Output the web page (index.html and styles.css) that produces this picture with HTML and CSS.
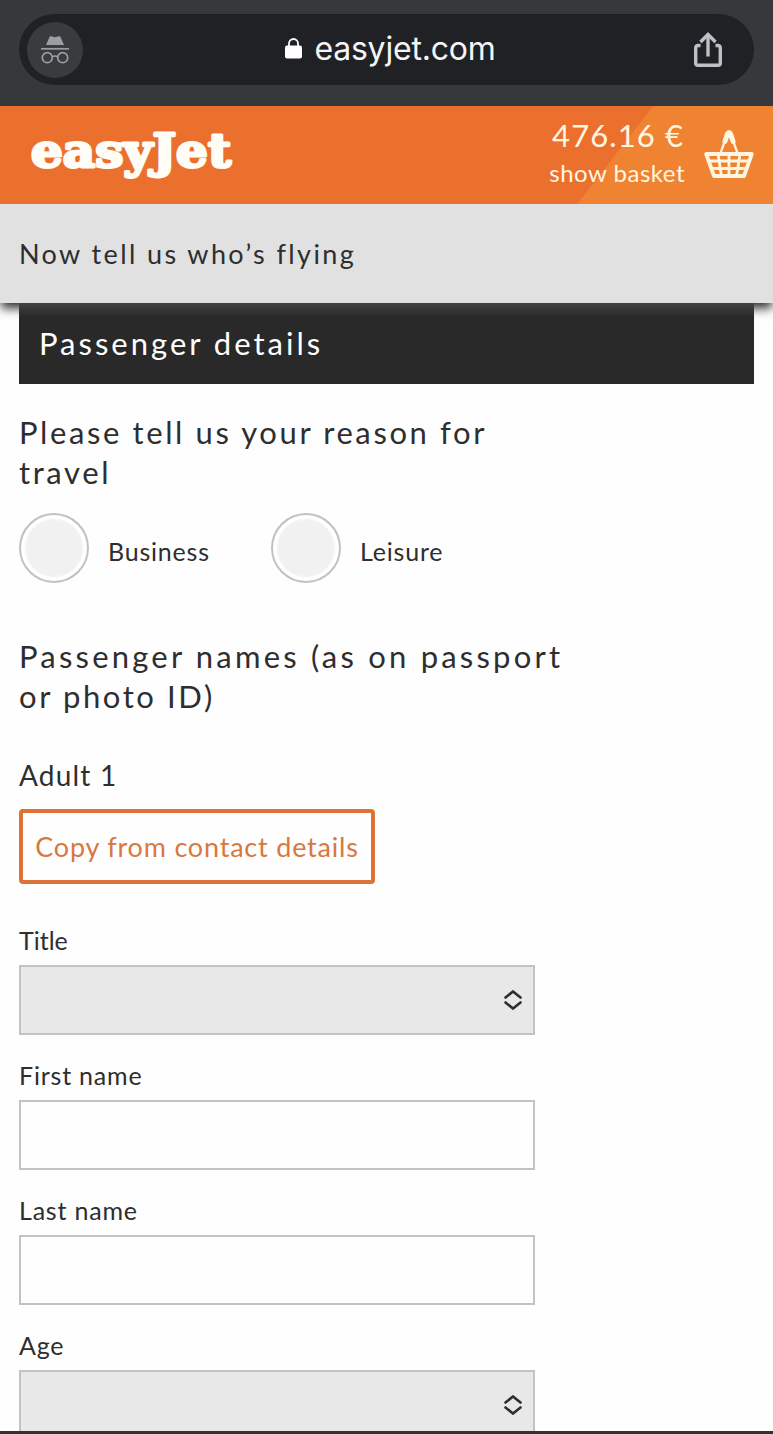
FILE: index.html
```
<!DOCTYPE html>
<html lang="en">
<head>
<meta charset="utf-8">
<title>easyJet - Passenger details</title>
<link rel="stylesheet" href="styles.css">
</head>
<body>
	<div class="browser-bar">
		<div class="address">
			<span class="incognito">
				<svg width="28" height="28" viewBox="0 0 28 28" fill="none" stroke="#9B9DA2" stroke-width="1.7">
					<path d="M5 9 L8.6 .8 Q9 0 10 .3 L14 1.3 L18 .3 Q19 0 19.4 .8 L23 9 Z" fill="#9B9DA2" stroke="none"/>
					<path d="M0 12.8 H28"/>
					<circle cx="6.3" cy="21.7" r="5"/>
					<circle cx="21.7" cy="21.7" r="5"/>
					<path d="M11.3 20.7 Q14 19.3 16.7 20.7"/>
				</svg>
			</span>
			<div class="domain">
				<svg width="17" height="21" viewBox="0 0 17 21">
					<path d="M4 9 V5.5 a4.5 4.5 0 0 1 9 0 V9" fill="none" stroke="#fff" stroke-width="1.8"/>
					<rect x="0" y="7.5" width="17" height="13" rx="2" fill="#fff"/>
				</svg>
				<span>easyjet.com</span>
			</div>
			<svg class="share" width="30" height="36" viewBox="0 0 30 36" fill="none" stroke="#BFC0C7" stroke-width="3.4">
				<path d="M7.5 13.5 H5 Q2.7 13.5 2.7 16 V31 Q2.7 33.3 5 33.3 H25 Q27.3 33.3 27.3 31 V16 Q27.3 13.5 25 13.5 H22.5"/>
				<path d="M15 24.5 V3"/>
				<path d="M7.5 10 L15 2.5 L22.5 10"/>
			</svg>
		</div>
	</div>
	<header class="header">
		<svg class="logo" width="220" height="80" viewBox="0 0 220 80">
			<text x="3" y="52" textLength="200" lengthAdjust="spacingAndGlyphs">easyJet</text>
		</svg>
		<div class="basket">
			<div class="basket-text">
				<div class="price">476.16 €</div>
				<div class="show">show basket</div>
			</div>
			<svg width="50" height="50" viewBox="0 0 50 50" fill="none" stroke="#FFF6E2">
				<path d="M16.5 24 L22 9 M33.5 24 L28 9" stroke-width="2.2"/>
				<path d="M20.9 12.5 L23.4 5 Q25 2.2 26.6 5 L29.1 12.5" stroke-width="5" stroke-linecap="round"/>
				<path d="M2.2 25 H47.8 L40 47 H10 Z" stroke-width="3.8" stroke-linejoin="round"/>
				<path d="M5 32 H45 M8 39.5 H42 M14 25 L17.5 47 M25 25 V47 M36 25 L32.5 47" stroke-width="2.8"/>
			</svg>
		</div>
	</header>
	<div class="step">Now tell us who’s flying</div>
	<main>
		<h1>Passenger details</h1>
		<h2>Please tell us your reason for travel</h2>
		<div class="reasons">
			<label class="reason"><input type="radio" name="reason"><span>Business</span></label>
			<label class="reason"><input type="radio" name="reason"><span>Leisure</span></label>
		</div>
		<h2 class="names"><span>Passenger names (as on passport</span> or photo ID)</h2>
		<h3>Adult 1</h3>
		<button class="copy" type="button">Copy from contact details</button>
		<form>
			<label class="field"><span class="title">Title</span>
				<div class="box select">
					<svg width="18" height="20" viewBox="0 0 18 20"><path d="M1.5 7.5 L9 1.5 L16.5 7.5 M1.5 12.5 L9 18.5 L16.5 12.5"/></svg>
				</div>
			</label>
			<label class="field"><span>First name</span>
				<input class="box" type="text">
			</label>
			<label class="field"><span>Last name</span>
				<input class="box" type="text">
			</label>
			<label class="field"><span>Age</span>
				<div class="box select">
					<svg width="18" height="20" viewBox="0 0 18 20"><path d="M1.5 7.5 L9 1.5 L16.5 7.5 M1.5 12.5 L9 18.5 L16.5 12.5"/></svg>
				</div>
			</label>
		</form>
	</main>
	<footer></footer>
</body>
</html>
```
FILE: styles.css
```
* {
	box-sizing: border-box;
}
body {
	margin: 0;
	height: 1434px;
	overflow: hidden;
	display: flex;
	flex-direction: column;
	background: #FEFEFE;
	color: #2E2E2E;
	font-family: Lato, "Liberation Sans", sans-serif;
}
svg {
	display: block;
	flex: none;
}
.browser-bar {
	flex: none;
	height: 106px;
	padding: 14px 19px 0;
	background: #37383C;
	border-bottom: 1px solid #4A2F24;
}
.address {
	height: 71px;
	padding: 0 31px 0 8px;
	border-radius: 36px;
	background: #202124;
	display: flex;
	align-items: center;
	justify-content: space-between;
}
.incognito {
	width: 56px;
	height: 56px;
	border-radius: 50%;
	background: #3A3B3E;
	display: flex;
	align-items: center;
	justify-content: center;
}
.domain {
	display: flex;
	align-items: center;
	gap: 12px;
	margin: 0 0 2px 5px;
	color: #F5F5F6;
	font-family: Inter, sans-serif;
	font-size: 32px;
	letter-spacing: -.2px;
}
.header {
	position: relative;
	z-index: 2;
	flex: none;
	height: 98px;
	padding: 0 19px 0 28px;
	display: flex;
	justify-content: space-between;
	background: linear-gradient(127.8deg, #EC702D 0 76.9%, #EF8331 77%);
}
.logo {
	margin-top: 9px;
}
.logo text {
	font: bold 46px "DejaVu Serif", serif;
	fill: #FFFDF6;
	stroke: #FFFDF6;
	stroke-width: 3;
	stroke-linejoin: round;
}
.basket {
	display: flex;
	gap: 19px;
	color: #FFF6E2;
}
.basket > svg {
	margin-top: 23px;
}
.basket-text {
	text-align: right;
	white-space: nowrap;
}
.price {
	margin-top: 10px;
	padding-right: 1px;
	font-size: 31px;
	line-height: 38px;
	letter-spacing: 1.1px;
}
.show {
	margin-top: 7px;
	font-size: 24px;
	line-height: 24px;
	letter-spacing: .5px;
}
.step {
	position: relative;
	flex: none;
	height: 99px;
	padding-left: 19px;
	background: #E1E1E1;
	box-shadow: 0 6px 10px -1px rgba(0,0,0,.85);
	font-size: 27px;
	line-height: 100px;
	letter-spacing: 2.4px;
}
main {
	flex: 1;
	min-height: 0;
	overflow: hidden;
	padding: 0 19px;
}
h1, h2, h3 {
	margin: 0;
	font-weight: 400;
}
h1 {
	position: relative;
	height: 81px;
	padding-left: 20px;
	background: linear-gradient(#424443, #292929 14px);
	color: #fff;
	font-size: 31px;
	line-height: 81px;
	letter-spacing: 3px;
}
h2 {
	width: 570px;
	margin-top: 28px;
	padding-right: 10px;
	font-size: 31px;
	line-height: 40px;
	letter-spacing: 2.6px;
}
.reasons {
	display: flex;
	margin-top: 21px;
}
.reason {
	width: 252px;
	display: flex;
	align-items: center;
	gap: 19px;
	font-size: 25px;
	letter-spacing: .8px;
}
.reason span {
	margin-top: 6px;
}
.reason input {
	appearance: none;
	flex: none;
	width: 70px;
	height: 70px;
	margin: 0;
	border: 2px solid #C2C2C2;
	border-radius: 50%;
	background: #F1F1F1;
	box-shadow: inset 0 0 2px 4px #fff;
}
.names {
	margin-top: 53px;
}
.names span {
	letter-spacing: 3.2px;
}
h3 {
	margin-top: 39px;
	font-size: 28px;
	line-height: 40px;
	letter-spacing: 1.2px;
}
.copy {
	display: block;
	width: 356px;
	height: 75px;
	margin-top: 14px;
	padding: 0;
	border: 4px solid #DC7439;
	border-radius: 4px;
	background: #FEFEFE;
	color: #D87840;
	font: 27px Lato, sans-serif;
	letter-spacing: .8px;
	white-space: nowrap;
}
form {
	margin-top: 40px;
}
.field {
	display: block;
	height: 135px;
	font-size: 25px;
	line-height: 32px;
	letter-spacing: .8px;
}
.field > span {
	display: block;
	height: 41px;
}
.field .title {
	letter-spacing: 0;
}
.box {
	display: block;
	width: 516px;
	height: 70px;
	border: 2px solid #C3C3C3;
	background: #FEFEFE;
}
.select {
	display: flex;
	align-items: center;
	justify-content: flex-end;
	padding-right: 11px;
	background: #E8E8E8;
}
.select path {
	fill: none;
	stroke: #2E2E2E;
	stroke-width: 2.6;
	stroke-linecap: round;
}
footer {
	flex: none;
	height: 3px;
	background: #333336;
}
```
